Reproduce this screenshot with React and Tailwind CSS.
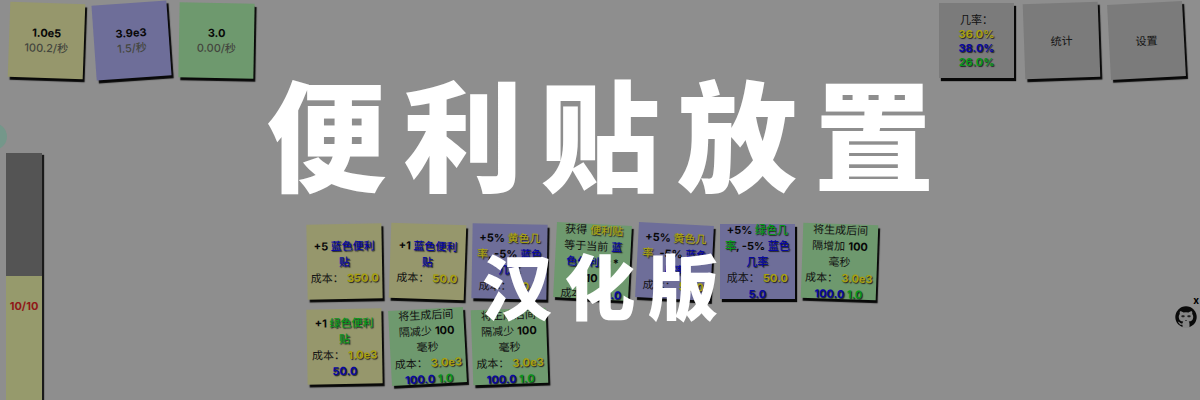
import React from "react";

const INK = {
  y: "text-[#a8a010] font-bold [text-shadow:1px_1px_1px_#222]",
  b: "text-[#0808a0] font-bold [text-shadow:1px_1px_1px_#222]",
  g: "text-[#08961a] font-bold [text-shadow:1px_1px_1px_#222]",
  yc: "text-[#a8a010] font-medium [text-shadow:1px_1px_1px_#222]",
  bc: "text-[#0808a0] font-medium [text-shadow:1px_1px_1px_#222]",
  gc: "text-[#08961a] font-medium [text-shadow:1px_1px_1px_#222]",
  k: "text-[#080808] font-bold",
  n: "text-[#121212]",
  m: "text-[#44463e] font-medium",
};

const PAPER = {
  yellow: "bg-[#96976c]",
  blue: "bg-[#6e6e99]",
  green: "bg-[#6e996e]",
  gray: "bg-[#7b7b7b]",
};

const UPGRADES = [
  { paper: "yellow", tilt: "-rotate-1", lines: [[["k", "+5 "], ["bc", "蓝色便利"]], [["bc", "贴"]], [["n", "成本： "], ["y", "350.0"]]] },
  { paper: "yellow", tilt: "rotate-2", lines: [[["k", "+1 "], ["bc", "蓝色便利"]], [["bc", "贴"]], [["n", "成本： "], ["y", "50.0"]]] },
  { paper: "blue", tilt: "rotate-1", lines: [[["k", "+5% "], ["yc", "黄色几"]], [["yc", "率"], ["k", ", -5% "], ["bc", "蓝色"]], [["bc", "几率"]], [["n", "成本： "], ["y", "50.0"]]] },
  { paper: "green", tilt: "rotate-3", lines: [[["n", "获得 "], ["yc", "便利贴"]], [["n", "等于当前 "], ["bc", "蓝"]], [["bc", "色便利贴"], ["k", " *"]], [["k", "10"]], [["n", "成本： "], ["b", "50.0"]]] },
  { paper: "blue", tilt: "rotate-3", lines: [[["k", "+5% "], ["yc", "黄色几"]], [["yc", "率"], ["k", ", -5% "], ["bc", "蓝色"]], [["bc", "几率"]], [["n", "成本： "], ["y", "50.0"]]] },
  { paper: "blue", tilt: "rotate-0", lines: [[["k", "+5% "], ["gc", "绿色几"]], [["gc", "率"], ["k", ", -5% "], ["bc", "蓝色"]], [["bc", "几率"]], [["n", "成本： "], ["y", "50.0"]], [["b", "5.0"]]] },
  { paper: "green", tilt: "rotate-2", lines: [[["n", "将生成后间"]], [["n", "隔增加 "], ["k", "100"]], [["n", "毫秒"]], [["n", "成本： "], ["y", "3.0e3"]], [["b", "100.0 "], ["g", "1.0"]]] },
  { paper: "yellow", tilt: "-rotate-1", lines: [[["k", "+1 "], ["gc", "绿色便利"]], [["gc", "贴"]], [["n", "成本： "], ["y", "1.0e3"]], [["b", "50.0"]]] },
  { paper: "green", tilt: "-rotate-3", lines: [[["n", "将生成后间"]], [["n", "隔减少 "], ["k", "100"]], [["n", "毫秒"]], [["n", "成本： "], ["y", "3.0e3"]], [["b", "100.0 "], ["g", "1.0"]]] },
  { paper: "green", tilt: "-rotate-2", lines: [[["n", "将生成后间"]], [["n", "隔减少 "], ["k", "100"]], [["n", "毫秒"]], [["n", "成本： "], ["y", "3.0e3"]], [["b", "100.0 "], ["g", "1.0"]]] },
];

const COUNTERS = [
  { paper: "yellow", tilt: "rotate-2", lines: [[["k", "1.0e5"]], [["m", "100.2/秒"]]] },
  { paper: "blue", tilt: "-rotate-4", lines: [[["k", "3.9e3"]], [["m", "1.5/秒"]]] },
  { paper: "green", tilt: "rotate-1", lines: [[["k", "3.0"]], [["m", "0.00/秒"]]] },
];

const MENU = [
  { paper: "gray", tilt: "rotate-0", lines: [[["n", "几率："]], [["y", "36.0%"]], [["b", "38.0%"]], [["g", "26.0%"]]] },
  { paper: "gray", tilt: "-rotate-2", button: true, lines: [[["n", "统计"]]] },
  { paper: "gray", tilt: "-rotate-3", button: true, lines: [[["n", "设置"]]] },
];

function Note({ paper, tilt, lines, button, leading = "leading-4" }) {
  const Tag = button ? "button" : "div";
  return (
    <Tag
      className={`flex size-[75px] shrink-0 flex-col items-center justify-center whitespace-nowrap text-center text-[11px] shadow-[2px_3px_1px_#080808] ${leading} ${PAPER[paper]} ${tilt}`}
    >
      {lines.map((line, i) => (
        <span key={i} className="block">
          {line.map(([ink, text], j) => (
            <span key={j} className={`whitespace-pre ${INK[ink]}`}>{text}</span>
          ))}
        </span>
      ))}
    </Tag>
  );
}

function Octocat() {
  return (
    <svg viewBox="0 0 22 22" className="size-[22px]" aria-hidden="true">
      <circle cx="11" cy="11" r="10.7" fill="#0a0a0a" />
      <path
        fill="#868686"
        d="M5 5.2c1.500 0 2.700.7 3.400 1.300a11 11 0 0 1 5.200 0c.7-.6 1.900-1.300 3.400-1.300.4 1 .4 2 .2 2.800.8 1 1.100 2 1 3.400-.2 2.700-1.800 3.900-4.500 4.200.6.7.8 1.400.8 2.300V22H7.500v-3.300c-2 .4-2.900-.3-3.600-1.800l-1-1c1.500-.3 2 1.500 3.200 1.600.6.1 1.100 0 1.500-.3.100-.6.3-1.200.7-1.600-2.700-.3-4.300-1.500-4.500-4.200-.1-1.400.2-2.400 1-3.400-.2-.8-.2-1.800.2-2.800Z"
      />
      <rect x="6.300" y="9.300" width="3.400" height="2" rx="1" fill="#222" />
      <rect x="12.300" y="9.300" width="3.400" height="2" rx="1" fill="#222" />
      <path d="M10 14.500h2" stroke="#333" strokeWidth=".8" />
    </svg>
  );
}

export default function App() {
  return (
    <div className="relative flex min-h-screen flex-col overflow-hidden bg-[#8e8e8e] font-['Inter','Noto_Sans_CJK_SC',sans-serif]">
      <header className="flex items-start justify-between pl-[9px] pr-4 pt-[3px]">
        <div className="flex gap-2.5">
          {COUNTERS.map((c, i) => <Note key={i} {...c} leading="leading-[15px]" />)}
        </div>
        <div className="flex gap-2.5">
          {MENU.map((c, i) => <Note key={i} {...c} leading="leading-[14px]" />)}
        </div>
      </header>

      <main className="grid flex-1 grid-cols-[1fr_auto_1fr]">
        <aside className="flex pl-1.5 pt-[75px]">
          <div className="flex w-9 flex-col bg-[#969a6c] shadow-[2px_2px_1px_#1a1a1a]">
            <div className="h-[123px] bg-[#545454]" />
            <div className="pt-[22px] text-center text-[11px] font-bold leading-4 text-[#901818]">10/10</div>
          </div>
          <div className="absolute -left-5 top-[123px] size-[27px] rounded-full bg-[#74978a]" />
        </aside>

        <section className="mt-[146px] grid w-[586px] grid-cols-7 content-start gap-y-2.5 pr-2">
          {UPGRADES.map((u, i) => <Note key={i} {...u} />)}
        </section>

        <aside className="flex flex-col items-end pr-[3px] pt-[216px]">
          <button className="-mr-0.5 text-[10px] font-bold leading-3 text-black" aria-label="关闭">x</button>
          <a href="#github" aria-label="GitHub"><Octocat /></a>
        </aside>
      </main>

      <div className="pointer-events-none absolute inset-x-0 top-14 flex flex-col items-center font-['Noto_Sans_CJK_SC',sans-serif] font-black text-white">
        <h1 className="flex gap-[17px] text-[120px] leading-[150px]">
          {[..."便利贴放置"].map((c) => <span key={c}>{c}</span>)}
        </h1>
        <h2 className="mt-8 flex gap-3 text-[71px] leading-[90px]">
          {[..."汉化版"].map((c) => <span key={c}>{c}</span>)}
        </h2>
      </div>
    </div>
  );
}
